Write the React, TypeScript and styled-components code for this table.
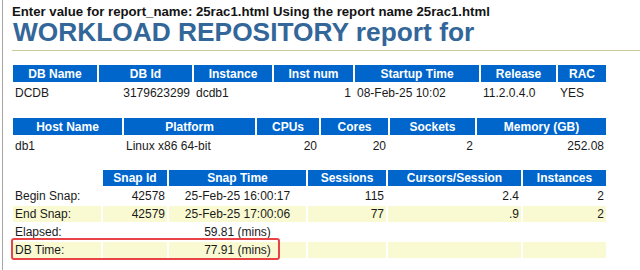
import React from "react";
import styled, { createGlobalStyle } from "styled-components";

const GlobalStyle = createGlobalStyle`
  html, body {
    margin: 0;
    padding: 0;
    background: #ffffff;
  }
  body {
    font-family: "Liberation Sans", Arial, Helvetica, sans-serif;
  }
`;

const Page = styled.div`
  margin-left: 2px;
  border-left: 1px solid #a6a6a6;
  height: 270px;
  padding-top: 4px;
  box-sizing: border-box;
  overflow: hidden;
`;

const Prompt = styled.div`
  margin-left: 9px;
  font-size: 13.2px;
  font-weight: bold;
  line-height: 15px;
  color: #141414;
  white-space: nowrap;
`;

const Title = styled.h1`
  margin: 0 0 12px 9px;
  padding: 0 0 4px 1px;
  font: bold 26.3px/27px "Liberation Sans", Arial, Helvetica, sans-serif;
  color: #336699;
  border-bottom: 1px solid #cccc99;
  white-space: nowrap;
`;

const Section = styled.div<{ $gap?: number }>`
  position: relative;
  margin-left: 8px;
  margin-bottom: ${p => p.$gap ?? 0}px;
`;

const Report = styled.table`
  border-spacing: 2px;
  table-layout: fixed;
  width: 597px;
  font-size: 12px;
  line-height: 14px;
`;

const Col = styled.col<{ $w: number }>`
  width: ${p => p.$w}px;
`;

const Row = styled.tr<{ $h: number }>`
  height: ${p => p.$h}px;
`;

const Head = styled.th<{ $blank?: boolean }>`
  padding: 0 4px;
  font-weight: bold;
  color: #ffffff;
  background: ${p => (p.$blank ? "transparent" : "#0066cc")};
  text-align: center;
  white-space: nowrap;
  overflow: hidden;
`;

const Cell = styled.td<{ $align: string; $shade?: boolean }>`
  padding: 0 2px;
  color: #1a1a1a;
  background: ${p => (p.$shade ? "#fafad2" : "#ffffff")};
  text-align: ${p => p.$align};
  white-space: nowrap;
  overflow: hidden;
`;

const Highlight = styled.div`
  position: absolute;
  left: 0;
  top: 70px;
  width: 269px;
  height: 22px;
  box-sizing: border-box;
  border: 2px solid #e84346;
  border-radius: 3px;
  pointer-events: none;
`;

type Block = {
  widths: number[];
  heads: string[];
  aligns: string[];
  rows: string[][];
  height: number;
  shadeOdd?: boolean;
};

const instance: Block = {
  widths: [84, 93, 78, 79, 124, 75, 48],
  heads: ["DB Name", "DB Id", "Instance", "Inst num", "Startup Time", "Release", "RAC"],
  aligns: ["left", "right", "left", "right", "left", "left", "left"],
  rows: [["DCDB", "3179623299", "dcdb1", "1", "08-Feb-25 10:02", "11.2.0.4.0", "YES"]],
  height: 17,
};

const host: Block = {
  widths: [109, 131, 62, 67, 85, 129],
  heads: ["Host Name", "Platform", "CPUs", "Cores", "Sockets", "Memory (GB)"],
  aligns: ["left", "left", "right", "right", "right", "right"],
  rows: [["db1", "Linux x86 64-bit", "20", "20", "2", "252.08"]],
  height: 17,
};

const snaps: Block = {
  widths: [88, 64, 137, 78, 133, 83],
  heads: ["", "Snap Id", "Snap Time", "Sessions", "Cursors/Session", "Instances"],
  aligns: ["left", "right", "center", "right", "right", "right"],
  rows: [
    ["Begin Snap:", "42578", "25-Feb-25 16:00:17", "115", "2.4", "2"],
    ["End Snap:", "42579", "25-Feb-25 17:00:06", "77", ".9", "2"],
    ["Elapsed:", "", "59.81 (mins)", "", "", ""],
    ["DB Time:", "", "77.91 (mins)", "", "", ""],
  ],
  height: 16,
  shadeOdd: true,
};

const ReportTable = ({ block }: { block: Block }) => (
  <Report>
    <colgroup>
      {block.widths.map((w, i) => (
        <Col key={i} $w={w} />
      ))}
    </colgroup>
    <tbody>
      <Row $h={block.height}>
        {block.heads.map((h, i) => (
          <Head key={i} $blank={!h}>
            {h}
          </Head>
        ))}
      </Row>
      {block.rows.map((row, r) => (
        <Row key={r} $h={block.height}>
          {row.map((v, c) => (
            <Cell key={c} $align={block.aligns[c]} $shade={block.shadeOdd && r % 2 === 1}>
              {v || "\u00a0"}
            </Cell>
          ))}
        </Row>
      ))}
    </tbody>
  </Report>
);

const App = () => (
  <>
    <GlobalStyle />
    <Page>
      <Prompt>Enter value for report_name: 25rac1.html Using the report name 25rac1.html</Prompt>
      <Title>WORKLOAD REPOSITORY report for</Title>
      <Section $gap={13}>
        <ReportTable block={instance} />
      </Section>
      <Section $gap={12}>
        <ReportTable block={host} />
      </Section>
      <Section>
        <ReportTable block={snaps} />
        <Highlight />
      </Section>
    </Page>
  </>
);

export default App;
